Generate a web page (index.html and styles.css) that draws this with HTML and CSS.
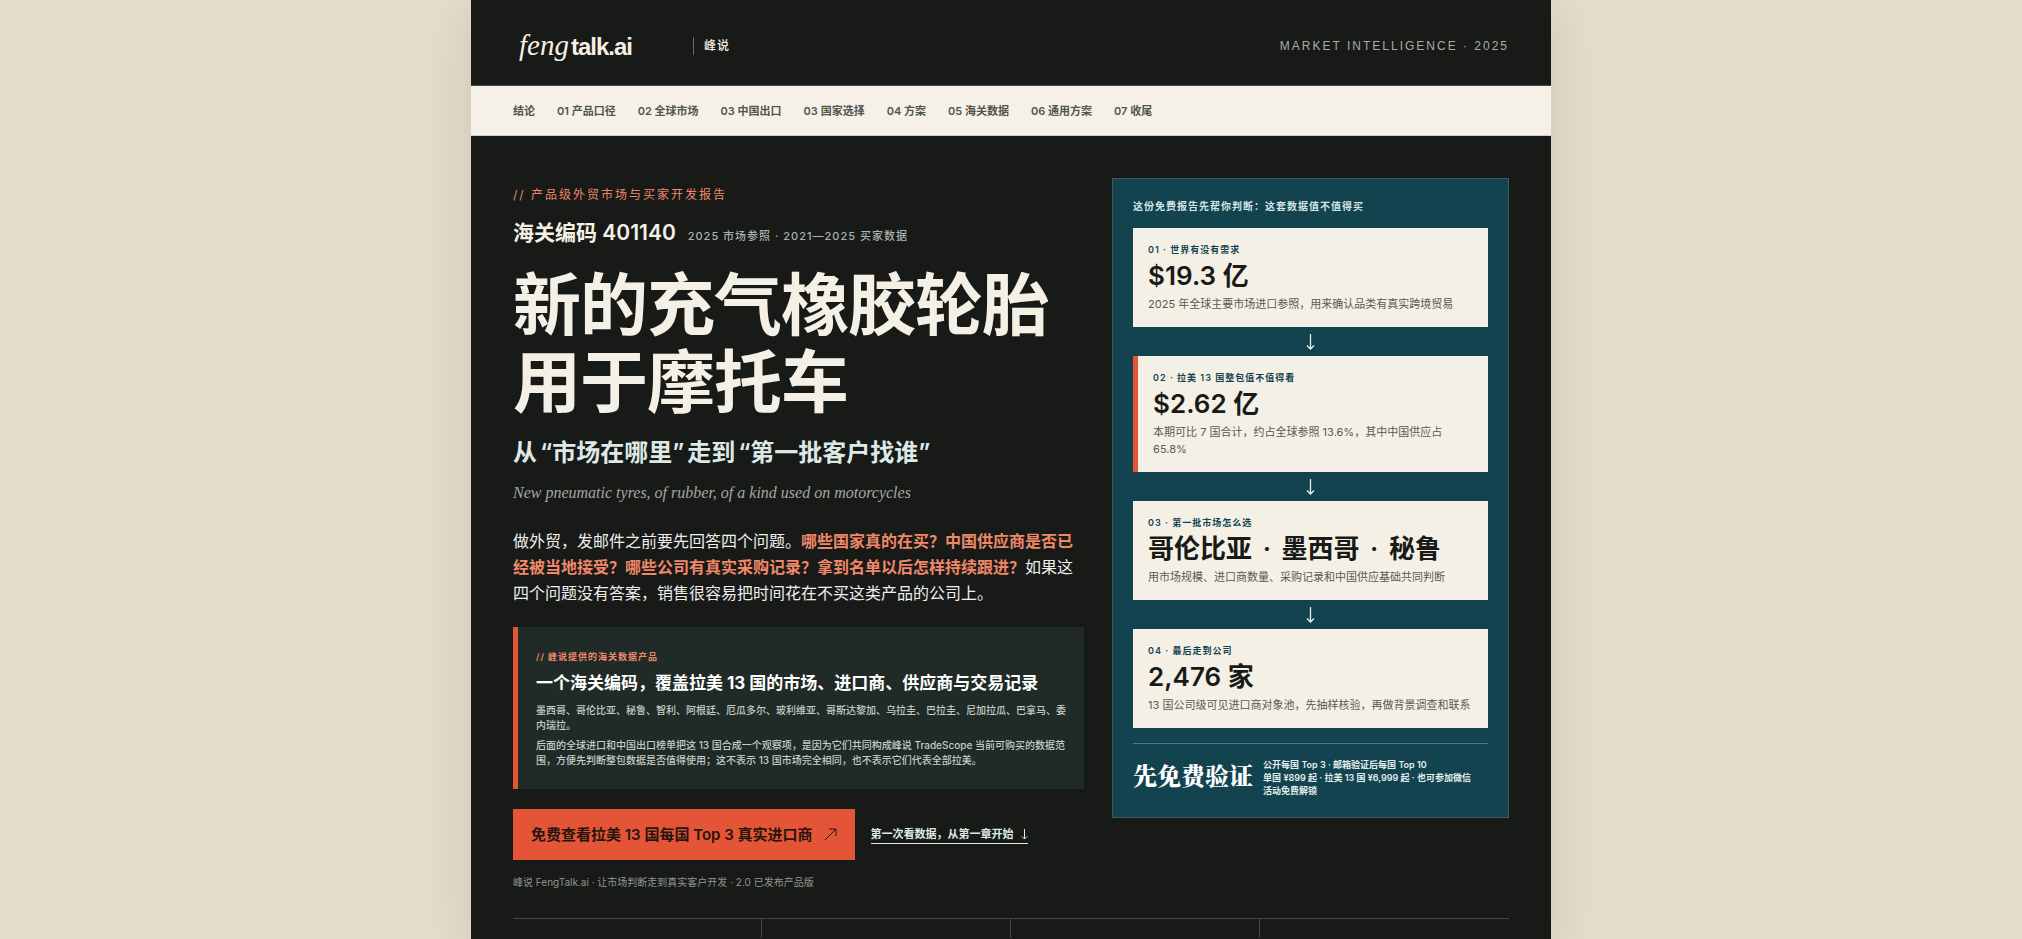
FILE: index.html
```html
<!DOCTYPE html>
<html lang="zh-CN">
<head>
    <meta charset="UTF-8">
    <meta name="viewport" content="width=device-width, initial-scale=1.0">
    <title>新的充气橡胶轮胎 用于摩托车 | 峰说 FengTalk.ai</title>
    <link rel="stylesheet" href="styles.css">
</head>
<body>
    <div class="page">
        <header class="topbar">
            <div class="brand">
                <a class="logo" href="#"><em>feng</em><b>talk.ai</b></a>
                <span class="brand-cn">峰说</span>
            </div>
            <div class="topbar-meta">MARKET INTELLIGENCE · 2025</div>
        </header>

        <nav class="chapters">
            <a href="#summary">结论</a>
            <a href="#product">01 产品口径</a>
            <a href="#world">02 全球市场</a>
            <a href="#china">03 中国出口</a>
            <a href="#country">03 国家选择</a>
            <a href="#plan">04 方案</a>
            <a href="#customs">05 海关数据</a>
            <a href="#general">06 通用方案</a>
            <a href="#end">07 收尾</a>
        </nav>

        <main class="hero">
            <div class="hero-grid">
                <section class="intro">
                    <p class="eyebrow">// 产品级外贸市场与买家开发报告</p>
                    <div class="code-row">
                        <strong>海关编码 401140</strong>
                        <span>2025 市场参照 · 2021—2025 买家数据</span>
                    </div>
                    <h1>新的充气橡胶轮胎<br>用于摩托车</h1>
                    <h2>从<span>“市场在哪里”</span>走到<span>“第一批客户找谁”</span></h2>
                    <p class="english" lang="en">New pneumatic tyres, of rubber, of a kind used on motorcycles</p>
                    <p class="lead">做外贸，发邮件之前要先回答四个问题。<strong>哪些国家真的在买？中国供应商是否已经被当地接受？哪些公司有真实采购记录？拿到名单以后怎样持续跟进？</strong>如果这四个问题没有答案，销售很容易把时间花在不买这类产品的公司上。</p>

                    <div class="product">
                        <span class="product-tag">// 峰说提供的海关数据产品</span>
                        <h3>一个海关编码，覆盖拉美 13 国的市场、进口商、供应商与交易记录</h3>
                        <p>墨西哥、哥伦比亚、秘鲁、智利、阿根廷、厄瓜多尔、玻利维亚、哥斯达黎加、乌拉圭、巴拉圭、尼加拉瓜、巴拿马、委内瑞拉。</p>
                        <p>后面的全球进口和中国出口榜单把这 13 国合成一个观察项，是因为它们共同构成峰说 TradeScope 当前可购买的数据范围，方便先判断整包数据是否值得使用；这不表示 13 国市场完全相同，也不表示它们代表全部拉美。</p>
                    </div>

                    <div class="actions">
                        <a class="btn" href="#customs">免费查看拉美 13 国每国 Top 3 真实进口商
                            <svg width="13" height="13" viewBox="0 0 13 13" aria-hidden="true"><path d="M1 12 12 1M5 1h7v7"/></svg>
                        </a>
                        <a class="text-link" href="#product">第一次看数据，从第一章开始
                            <svg width="7" height="11" viewBox="0 0 7 11" aria-hidden="true"><path d="M3.500 0v10M1 7.500l2.500 2.500L6 7.500"/></svg>
                        </a>
                    </div>
                    <p class="note">峰说 FengTalk.ai · 让市场判断走到真实客户开发 · 2.0 已发布产品版</p>
                </section>

                <aside class="panel">
                    <p class="panel-title">这份免费报告先帮你判断：这套数据值不值得买</p>
                    <div class="step">
                        <small>01 · 世界有没有需求</small>
                        <b>$19.3 亿</b>
                        <p>2025 年全球主要市场进口参照，用来确认品类有真实跨境贸易</p>
                    </div>
                    <svg class="arrow" width="9" height="16" viewBox="0 0 9 16" aria-hidden="true"><path d="M4.500 0v15M1 11.500l3.500 3.500L8 11.500"/></svg>
                    <div class="step step-accent">
                        <small>02 · 拉美 13 国整包值不值得看</small>
                        <b>$2.62 亿</b>
                        <p>本期可比 7 国合计，约占全球参照 13.6%，其中中国供应占 65.8%</p>
                    </div>
                    <svg class="arrow" width="9" height="16" viewBox="0 0 9 16" aria-hidden="true"><path d="M4.500 0v15M1 11.500l3.500 3.500L8 11.500"/></svg>
                    <div class="step">
                        <small>03 · 第一批市场怎么选</small>
                        <b>哥伦比亚 <i>·</i> 墨西哥 <i>·</i> 秘鲁</b>
                        <p>用市场规模、进口商数量、采购记录和中国供应基础共同判断</p>
                    </div>
                    <svg class="arrow" width="9" height="16" viewBox="0 0 9 16" aria-hidden="true"><path d="M4.500 0v15M1 11.500l3.500 3.500L8 11.500"/></svg>
                    <div class="step">
                        <small>04 · 最后走到公司</small>
                        <b>2,476 家</b>
                        <p>13 国公司级可见进口商对象池，先抽样核验，再做背景调查和联系</p>
                    </div>
                    <div class="panel-foot">
                        <strong>先免费验证</strong>
                        <span>公开每国 Top 3 · 邮箱验证后每国 Top 10<br>单国 ¥899 起 · 拉美 13 国 ¥6,999 起 · 也可参加微信活动免费解锁</span>
                    </div>
                </aside>
            </div>

            <div class="stats">
                <div></div>
                <div></div>
                <div></div>
                <div></div>
            </div>
        </main>
    </div>
</body>
</html>
```
FILE: styles.css
```css
* {
    margin: 0;
    padding: 0;
    box-sizing: border-box;
}

body {
    background: #e4dccc;
    color: #181a17;
    font-family: Inter, "Noto Sans CJK SC", sans-serif;
}

a {
    color: inherit;
    text-decoration: none;
}

svg {
    fill: none;
    stroke: currentColor;
}

.page {
    max-width: 1080px;
    min-height: 100vh;
    margin: 0 auto;
    background: #181a17;
    box-shadow: 0 10px 50px rgba(40, 35, 20, 0.12);
}

/* Header */
.topbar {
    display: flex;
    align-items: center;
    justify-content: space-between;
    height: 86px;
    padding: 6px 42px 0;
    border-bottom: 1px solid #4b4640;
    color: #f5f0e6;
}

.brand {
    display: flex;
    align-items: center;
    gap: 61px;
}

.logo {
    display: flex;
    align-items: baseline;
    gap: 2px;
    padding-left: 6px;
    line-height: 28px;
}

.logo em {
    font-family: Georgia, "Liberation Serif", serif;
    font-size: 29px;
}

.logo b {
    font-family: "Liberation Sans", sans-serif;
    font-size: 24px;
    letter-spacing: -1px;
}

.brand-cn {
    padding-left: 10px;
    border-left: 1px solid #6b6d68;
    font-size: 12px;
    font-weight: 500;
    line-height: 18px;
    letter-spacing: 1px;
}

.topbar-meta {
    color: #a9ada8;
    font-family: "Liberation Sans", sans-serif;
    font-size: 12px;
    letter-spacing: 2px;
}

/* Chapter links */
.chapters {
    display: flex;
    align-items: center;
    gap: 22px;
    height: 50px;
    padding: 0 42px 2px;
    background: #f6f1e8;
    border-bottom: 1px solid #d2cec2;
    color: #50554f;
    font-size: 11px;
    font-weight: 600;
}

/* Hero */
.hero {
    padding: 42px 42px 0;
}

.hero-grid {
    display: grid;
    grid-template-columns: 1.18fr 0.82fr;
    align-items: start;
    gap: 28px;
}

.intro {
    padding-top: 8px;
}

.eyebrow {
    color: #ee886a;
    font-size: 12px;
    line-height: 18px;
    letter-spacing: 2px;
}

.code-row {
    display: flex;
    align-items: baseline;
    gap: 12px;
    margin-top: 13px;
    line-height: 32px;
}

.code-row strong {
    color: #f5f0e6;
    font-size: 21px;
    font-weight: 600;
}

.code-row span {
    color: #aab3ae;
    font-size: 11px;
    font-weight: 500;
    letter-spacing: 1px;
}

h1 {
    margin-top: 15px;
    color: #f5f0e6;
    font-size: 68px;
    font-weight: 700;
    line-height: 77px;
    letter-spacing: -1px;
}

h2 {
    margin-top: 15px;
    color: #dce9e6;
    font-size: 24px;
    font-weight: 600;
    line-height: 34px;
}

h2 span {
    padding: 0 3px;
}

.english {
    margin-top: 11px;
    color: #a3a8a3;
    font-family: Georgia, "Liberation Serif", serif;
    font-size: 16px;
    font-style: italic;
    line-height: 24px;
}

.lead {
    margin-top: 23px;
    color: #edf0ec;
    font-size: 16px;
    line-height: 26px;
}

.lead strong {
    color: #ee886a;
    font-weight: 600;
}

.product {
    margin-top: 21px;
    padding: 22px 18px 21px;
    background: #202a27;
    border-left: 5px solid #e35536;
}

.product-tag {
    display: block;
    color: #ee886a;
    font-size: 9px;
    font-weight: 600;
    line-height: 16px;
    letter-spacing: 1px;
}

.product h3 {
    margin: 6px 0 8px;
    color: #fff;
    font-size: 17px;
    font-weight: 700;
    line-height: 24px;
}

.product p {
    margin-top: 5px;
    color: #c5cdc8;
    font-size: 10px;
    font-weight: 500;
    line-height: 15px;
}

.actions {
    display: flex;
    align-items: center;
    gap: 16px;
    margin-top: 20px;
}

.btn {
    display: flex;
    align-items: center;
    gap: 11px;
    padding: 14px 18px;
    background: #e35536;
    color: #26150e;
    font-size: 15px;
    font-weight: 600;
    line-height: 23px;
}

.text-link {
    display: flex;
    align-items: center;
    gap: 7px;
    border-bottom: 1px solid #dce9e6;
    color: #dce9e6;
    font-size: 11px;
    font-weight: 700;
    line-height: 17px;
}

.note {
    margin-top: 14px;
    color: #8f9691;
    font-size: 10px;
    line-height: 16px;
}

/* Decision panel */
.panel {
    display: flex;
    flex-direction: column;
    padding: 19px 20px 20px;
    background: #12434f;
    border: 1px solid #3c5c60;
}

.panel-title {
    margin-bottom: 14px;
    color: #d5e6e8;
    font-size: 10px;
    font-weight: 700;
    line-height: 16px;
    letter-spacing: 1px;
}

.step {
    padding: 14px 15px;
    background: #f5f0e6;
}

.step-accent {
    border-left: 5px solid #e35536;
}

.step small {
    display: block;
    color: #12434f;
    font-size: 9px;
    font-weight: 600;
    line-height: 16px;
    letter-spacing: 1px;
}

.step b {
    display: block;
    font-size: 26px;
    font-weight: 600;
    line-height: 36px;
}

.step b i {
    padding: 0 4px;
    font-style: normal;
}

.step p {
    margin-top: 2px;
    color: #565b55;
    font-size: 11px;
    line-height: 17px;
}

.arrow {
    align-self: center;
    margin: 7px 0 6px;
    color: #e4f2f4;
    stroke-width: 1.3;
}

.panel-foot {
    display: flex;
    align-items: flex-start;
    gap: 10px;
    margin-top: 15px;
    padding-top: 14px;
    border-top: 1px solid #4f7880;
}

.panel-foot strong {
    flex: none;
    color: #fff;
    font-family: "Noto Serif CJK SC", "Noto Sans CJK SC", serif;
    font-size: 24px;
    font-weight: 900;
    line-height: 34px;
}

.panel-foot span {
    padding-right: 16px;
    color: #e4eeee;
    font-size: 9px;
    font-weight: 600;
    line-height: 13px;
}

/* Stat columns */
.stats {
    display: grid;
    grid-template-columns: repeat(4, 1fr);
    margin-top: 28px;
    border-top: 1px solid #454845;
}

.stats div {
    min-height: 19px;
    border-right: 1px solid #454845;
}

.stats div:last-child {
    border-right: none;
}
```
